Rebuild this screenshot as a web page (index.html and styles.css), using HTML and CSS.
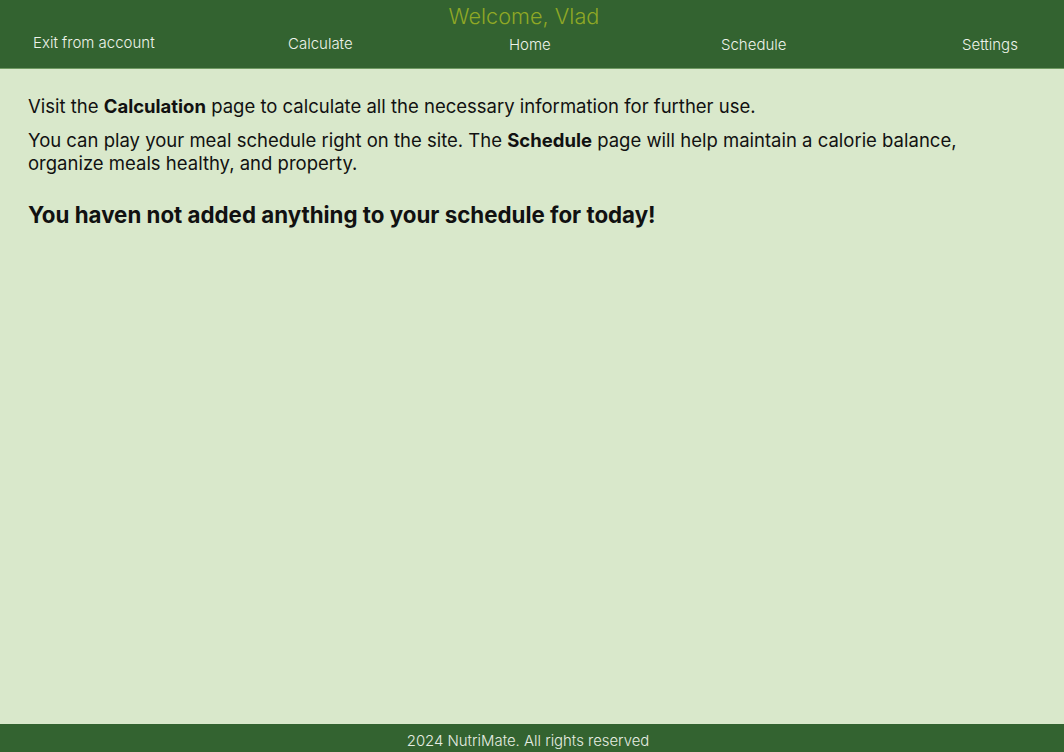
FILE: index.html
```html
<!DOCTYPE html>
<html lang="en">
<head>
<meta charset="utf-8">
<title>NutriMate</title>
<link rel="stylesheet" href="styles.css">
</head>
<body>
<div class="page">
  <header class="header">
    <div class="welcome">Welcome, Vlad</div>
    <nav class="nav">
      <a class="nav-item nav-exit">Exit from account</a>
      <a class="nav-item nav-calc">Calculate</a>
      <a class="nav-item nav-home">Home</a>
      <a class="nav-item nav-sched">Schedule</a>
      <a class="nav-item nav-set">Settings</a>
    </nav>
  </header>
  <main class="content">
    <p class="text">Visit the <b>Calculation</b> page to calculate all the necessary information for further use.</p>
    <p class="text">You can play your meal schedule right on the site. The <b>Schedule</b> page will help maintain a calorie balance, organize meals healthy, and property.</p>
    <h2 class="notice">You haven not added anything to your schedule for today!</h2>
  </main>
  <footer class="footer">2024 NutriMate. All rights reserved</footer>
</div>
</body>
</html>
```
FILE: styles.css
```css
* { box-sizing: border-box; }
html, body { margin: 0; padding: 0; height: 100%; }
body {
  font-family: Inter, "Noto Sans", sans-serif;
  background: #d9e8cb;
  color: #111;
}
.page {
  min-height: 752px;
  display: flex;
  flex-direction: column;
}
.header {
  background: #336330;
  height: 69px;
  border-bottom: 1px solid #6f9a62;
  padding-top: 3px;
}
.welcome {
  text-align: center;
  font-size: 21.7px;
  font-weight: 300;
  color: #8fa825;
  line-height: 26px;
  padding-right: 16px;
}
.nav {
  display: grid;
  grid-template-columns: 255px 221px 212px 241px 1fr;
  padding-left: 33px;
  margin-top: 5px;
}
.nav-item {
  color: #eef3ea;
  font-size: 15px;
  font-weight: 300;
  line-height: 22px;
  cursor: pointer;
}
.nav-exit { margin-top: -2px; }
.nav-calc { margin-top: -1px; }
.content {
  flex: 1;
  padding: 26px 80px 12px 28px;
}
.text {
  font-size: 18.5px;
  line-height: 23px;
  margin: 0 0 11px;
}
.text b { font-weight: 700; }
.notice {
  font-size: 22.3px;
  font-weight: 700;
  line-height: 28px;
  margin: 26px 0 0;
}
.footer {
  background: #336330;
  color: #e6ede2;
  height: 28px;
  text-align: center;
  font-size: 14.9px;
  font-weight: 300;
  line-height: 34px;
  padding-right: 8px;
  overflow: hidden;
}
```
